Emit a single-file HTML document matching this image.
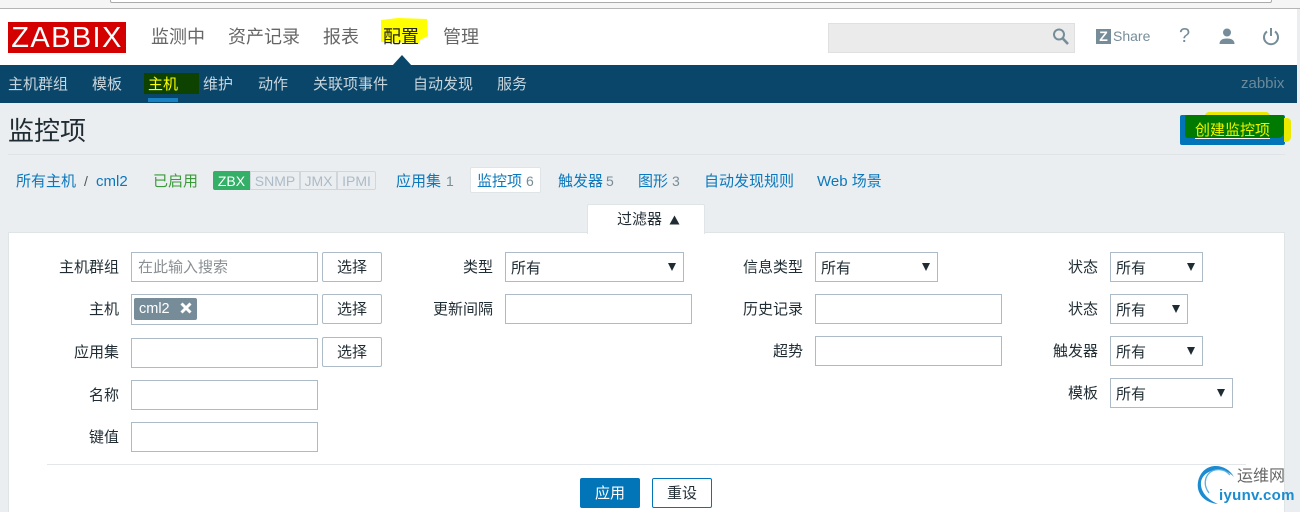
<!DOCTYPE html>
<html lang="zh">
<head>
<meta charset="utf-8">
<title>监控项</title>
<style>
html,body{margin:0;padding:0;width:1300px;height:512px;overflow:hidden;}
body{position:relative;background:#ebeef0;font-family:"Liberation Sans","Noto Sans CJK SC",sans-serif;color:#1f2c33;}
div,span,a{position:absolute;white-space:nowrap;box-sizing:border-box;}
.m{font-size:18px;color:#666;top:27px;line-height:20px;}
.s{font-size:15px;color:#c9d5dc;top:75px;line-height:20px;}
.l{font-size:15px;line-height:20px;color:#1f2c33;text-align:right;margin-top:2px;}
.b{font-size:15px;color:#0b78bd;top:172px;line-height:20px;}
.g{font-size:14px;color:#768d99;top:171px;line-height:20px;}
.i{background:#fff;border:1px solid #acbbc7;height:30px;}
.btn{background:#fff;border:1px solid #acbbc7;border-radius:2px;height:30px;width:60px;left:322px;text-align:center;font-size:15px;line-height:29px;color:#1f2c33;}
.sel{background:#fff;border:1px solid #acbbc7;height:30px;font-size:15px;line-height:31px;padding-left:5px;color:#1f2c33;}
.sel i{position:absolute;top:10px;right:7px;width:0;height:0;border-left:4px solid transparent;border-right:4px solid transparent;border-top:8px solid #1f2c33;}
.tg{top:171px;height:19px;border:1px solid #d0d7dc;background:#ebeef0;color:#acbbc7;font-size:14px;line-height:18px;text-align:center;}
</style>
</head>
<body>
<!-- browser strip -->
<div style="left:0;top:0;width:1300px;height:9px;background:#f5f5f5;border-bottom:1px solid #b5b5b5"></div>
<div style="left:110px;top:-6px;width:1162px;height:9px;background:#fff;border:1px solid #aaa;border-radius:2px"></div>
<!-- top header -->
<div style="left:0;top:9px;width:1297px;height:56px;background:#fff"></div>
<div style="left:8px;top:22px;width:118px;height:31px;background:#d40000;color:#fff;font-size:29px;line-height:32px;text-align:center;letter-spacing:1.4px">ZABBIX</div>
<svg style="position:absolute;left:0;top:0" width="440" height="50" viewBox="0 0 440 50"><path d="M381 20L398 18L427 19L428 36L420 40L419 43L381 42z" fill="#ffff00"/></svg>
<span class="m" style="left:151px">监测中</span>
<span class="m" style="left:228px">资产记录</span>
<span class="m" style="left:323px">报表</span>
<span class="m" style="left:383px;color:#222">配置</span>
<span class="m" style="left:443px">管理</span>
<div style="left:828px;top:23px;width:247px;height:30px;background:#ebebeb;border:1px solid #e0e0e0"></div>
<svg style="position:absolute;left:1050px;top:26px" width="22" height="22" viewBox="0 0 22 22"><circle cx="9" cy="8.500" r="5" fill="none" stroke="#768d99" stroke-width="2"/><path d="M12.800 12.500L18 18" stroke="#768d99" stroke-width="2.600" fill="none"/></svg>
<div style="left:1096px;top:29px;width:15px;height:15px;background:#768d99;color:#fff;font-size:14px;font-weight:bold;line-height:15px;text-align:center">Z</div>
<span style="left:1113px;top:26px;font-size:14px;line-height:20px;color:#768d99">Share</span>
<span style="left:1179px;top:25px;font-size:20px;line-height:23px;color:#768d99">?</span>
<svg style="position:absolute;left:1217px;top:26px" width="20" height="20" viewBox="0 0 20 20"><circle cx="10" cy="6.500" r="4" fill="#768d99"/><path d="M2.500 18c0-4 3-5.500 7.500-5.500s7.500 1.500 7.500 5.500z" fill="#768d99"/></svg>
<svg style="position:absolute;left:1261px;top:26px" width="20" height="20" viewBox="0 0 20 20"><path d="M6 5.500a7 7 0 1 0 8 0M10 2v8" fill="none" stroke="#768d99" stroke-width="2"/></svg>
<!-- sub nav -->
<div style="left:0;top:65px;width:1297px;height:38px;background:#0a466a"></div>
<svg style="position:absolute;left:391px;top:55px" width="22" height="11" viewBox="0 0 22 11"><path d="M1 11L11 0L21 11z" fill="#0a466a"/></svg>
<span class="s" style="left:8px">主机群组</span>
<span class="s" style="left:92px">模板</span>
<div style="left:144px;top:73px;width:55px;height:21px;background:#0e4200"></div>
<span class="s" style="left:148px;color:#ffff00">主机</span>
<div style="left:148px;top:98px;width:30px;height:4px;background:#1a80c4"></div>
<span class="s" style="left:203px">维护</span>
<span class="s" style="left:258px">动作</span>
<span class="s" style="left:313px">关联项事件</span>
<span class="s" style="left:413px">自动发现</span>
<span class="s" style="left:497px">服务</span>
<span style="left:1241px;top:74px;font-size:15px;line-height:20px;color:#6b8a9a">zabbix</span>
<!-- title -->
<span style="left:8px;top:113px;font-size:26px;line-height:36px;color:#1f2c33">监控项</span>
<div style="left:1180px;top:115px;width:105px;height:30px;background:#0275b8;border-radius:2px"></div>
<div style="left:1284px;top:118px;width:7px;height:24px;background:#eaea00;border-radius:0 4px 5px 0"></div>
<div style="left:1205px;top:112px;width:65px;height:4px;background:#eaea00;border-radius:4px 4px 0 0"></div>
<div style="left:1185px;top:115px;width:99px;height:23px;background:#007a00;border-radius:2px 2px 6px 3px"></div>
<span style="left:1195px;top:121px;font-size:15px;line-height:20px;color:#eef500;border-bottom:1px solid #fff;height:18px">创建监控项</span>
<div style="left:8px;top:154px;width:1277px;height:1px;background:#dfe4e7"></div>
<!-- breadcrumb -->
<span class="b" style="left:16px">所有主机</span>
<span class="g" style="left:84px;color:#555">/</span>
<span class="b" style="left:96px;color:#0b78bd">cml2</span>
<span class="b" style="left:153px;color:#3a9a3a">已启用</span>
<div class="tg" style="left:213px;width:37px;background:#34af67;border-color:#34af67;color:#fff;border-radius:2px 0 0 2px">ZBX</div>
<div class="tg" style="left:250px;width:50px">SNMP</div>
<div class="tg" style="left:300px;width:37px">JMX</div>
<div class="tg" style="left:337px;width:39px;border-radius:0 2px 2px 0">IPMI</div>
<span class="b" style="left:396px">应用集</span><span class="g" style="left:446px">1</span>
<div style="left:470px;top:167px;width:71px;height:26px;background:#fff;border:1px solid #dfe4e7;border-radius:2px"></div>
<span class="b" style="left:477px">监控项</span><span class="g" style="left:526px">6</span>
<span class="b" style="left:558px">触发器</span><span class="g" style="left:606px">5</span>
<span class="b" style="left:638px">图形</span><span class="g" style="left:672px">3</span>
<span class="b" style="left:704px">自动发现规则</span>
<span class="b" style="left:817px">Web 场景</span>
<!-- filter -->
<div style="left:8px;top:232px;width:1277px;height:290px;background:#fff;border:1px solid #dfe4e7"></div>
<div style="left:587px;top:204px;width:118px;height:30px;background:#fff;border:1px solid #dfe4e7;border-bottom:0;border-radius:2px 2px 0 0"></div>
<span style="left:617px;top:210px;font-size:15px;line-height:20px;color:#1f2c33">过滤器</span>
<svg style="position:absolute;left:669px;top:215px" width="11" height="10" viewBox="0 0 11 10"><path d="M0.500 9.500L5.500 0.500L10.500 9.500z" fill="#1f2c33"/></svg>
<!-- col 1 -->
<span class="l" style="right:1181px;top:256px">主机群组</span>
<div class="i" style="left:131px;top:252px;width:187px"></div>
<span style="left:138px;top:258px;font-size:15px;line-height:20px;color:#8a8f93">在此输入搜索</span>
<div class="btn" style="top:252px">选择</div>
<span class="l" style="right:1181px;top:298px">主机</span>
<div class="i" style="left:131px;top:294px;width:187px;height:31px"></div>
<div style="left:134px;top:298px;width:63px;height:22px;background:#768d99;border-radius:2px"></div>
<span style="left:139px;top:299px;font-size:14.500px;line-height:20px;color:#fff">cml2</span>
<svg style="position:absolute;left:180px;top:302px" width="12" height="12" viewBox="0 0 12 12"><path d="M1.500 1.500L10.500 10.500M10.500 1.500L1.500 10.500" stroke="#fff" stroke-width="3" fill="none"/></svg>
<div class="btn" style="top:294px">选择</div>
<span class="l" style="right:1181px;top:341px">应用集</span>
<div class="i" style="left:131px;top:338px;width:187px"></div>
<div class="btn" style="top:337px">选择</div>
<span class="l" style="right:1181px;top:384px">名称</span>
<div class="i" style="left:131px;top:380px;width:187px"></div>
<span class="l" style="right:1181px;top:426px">键值</span>
<div class="i" style="left:131px;top:422px;width:187px"></div>
<!-- col 2 -->
<span class="l" style="right:807px;top:256px">类型</span>
<div class="sel" style="left:505px;top:252px;width:179px">所有<i></i></div>
<span class="l" style="right:807px;top:298px">更新间隔</span>
<div class="i" style="left:505px;top:294px;width:187px"></div>
<!-- col 3 -->
<span class="l" style="right:497px;top:256px">信息类型</span>
<div class="sel" style="left:815px;top:252px;width:123px">所有<i></i></div>
<span class="l" style="right:497px;top:298px">历史记录</span>
<div class="i" style="left:815px;top:294px;width:187px"></div>
<span class="l" style="right:497px;top:340px">超势</span>
<div class="i" style="left:815px;top:336px;width:187px"></div>
<!-- col 4 -->
<span class="l" style="right:202px;top:256px">状态</span>
<div class="sel" style="left:1110px;top:252px;width:93px">所有<i></i></div>
<span class="l" style="right:202px;top:298px">状态</span>
<div class="sel" style="left:1110px;top:294px;width:78px">所有<i></i></div>
<span class="l" style="right:202px;top:340px">触发器</span>
<div class="sel" style="left:1110px;top:336px;width:93px">所有<i></i></div>
<span class="l" style="right:202px;top:382px">模板</span>
<div class="sel" style="left:1110px;top:378px;width:123px">所有<i></i></div>
<!-- footer -->
<div style="left:47px;top:464px;width:1199px;height:1px;background:#e4e7ea"></div>
<div style="left:580px;top:478px;width:60px;height:30px;background:#0275b8;border-radius:2px;color:#fff;font-size:15px;line-height:31px;text-align:center">应用</div>
<div style="left:652px;top:478px;width:60px;height:30px;background:#fff;border:1px solid #0275b8;border-radius:2px;color:#1f2c33;font-size:15px;line-height:29px;text-align:center">重设</div>
<!-- watermark -->
<svg style="position:absolute;left:1196px;top:462px" width="46" height="46" viewBox="0 0 46 46"><path d="M38 15C30 0 6 -1 2 20C0 32 9 41 22 42C12 38 4 30 5 20C7 7 28 3 38 15z" fill="#1a8ccf"/><path d="M34 13C27 5 14 6 10 16C8 22 10 27 13 31" fill="none" stroke="#5cb0e0" stroke-width="1.300"/></svg>
<span style="left:1237px;top:467px;font-size:16px;line-height:20px;color:#666">运维网</span>
<span style="left:1219px;top:487px;font-size:15px;font-weight:bold;line-height:18px;color:#1a8ccf;letter-spacing:.3px">iyunv.com</span>
</body>
</html>
